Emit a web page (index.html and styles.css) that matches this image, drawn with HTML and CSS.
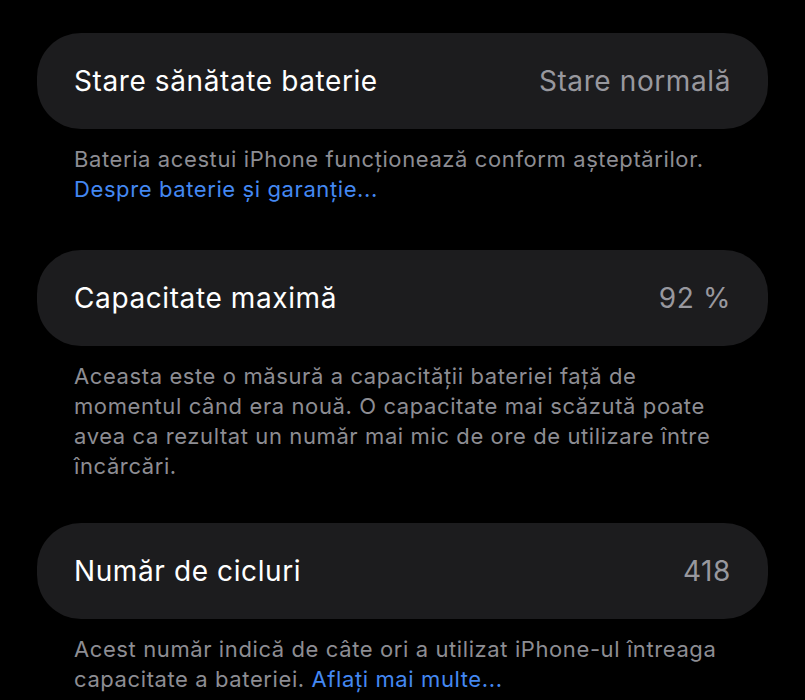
FILE: index.html
```html
<!DOCTYPE html>
<html lang="ro">
<head>
<meta charset="utf-8">
<title>Baterie</title>
<link rel="stylesheet" href="styles.css">
</head>
<body>
<main class="page">
  <section class="group group-first">
    <div class="cell">
      <span class="label">Stare sănătate baterie</span>
      <span class="value">Stare normală</span>
    </div>
    <p class="footer">Bateria acestui iPhone funcționează conform așteptărilor.<br><a class="link" href="#">Despre baterie și garanție...</a></p>
  </section>
  <section class="group">
    <div class="cell">
      <span class="label">Capacitate maximă</span>
      <span class="value">92 %</span>
    </div>
    <p class="footer">Aceasta este o măsură a capacității bateriei față de<br>momentul când era nouă. O capacitate mai scăzută poate<br>avea ca rezultat un număr mai mic de ore de utilizare între<br>încărcări.</p>
  </section>
  <section class="group">
    <div class="cell">
      <span class="label">Număr de cicluri</span>
      <span class="value">418</span>
    </div>
    <p class="footer">Acest număr indică de câte ori a utilizat iPhone-ul întreaga<br>capacitate a bateriei. <a class="link" href="#">Aflați mai multe...</a></p>
  </section>
</main>
</body>
</html>
```
FILE: styles.css
```css
html, body {
  margin: 0;
  padding: 0;
  background: #000;
}
body {
  font-family: Inter, "Noto Sans", "DejaVu Sans", sans-serif;
  -webkit-font-smoothing: antialiased;
}
.page {
  width: 731px;
  padding: 33px 0 0 37px;
  display: flex;
  flex-direction: column;
  gap: 42px;
}
.group {
  display: flex;
  flex-direction: column;
}
.group-first {
  padding-bottom: 4px;
}
.cell {
  height: 96px;
  background: #1c1c1e;
  border-radius: 44px;
  display: flex;
  align-items: center;
  justify-content: space-between;
  padding: 0 37px;
  font-size: 28px;
  font-weight: 400;
  letter-spacing: 0.6px;
}
.label {
  color: #fff;
}
.value {
  color: #98989e;
}
.footer {
  margin: 15px 0 0;
  padding: 0 37px;
  font-size: 22px;
  line-height: 30px;
  color: #8d8d93;
  letter-spacing: 0.6px;
}
.link {
  color: #4488f2;
  text-decoration: none;
}
```
